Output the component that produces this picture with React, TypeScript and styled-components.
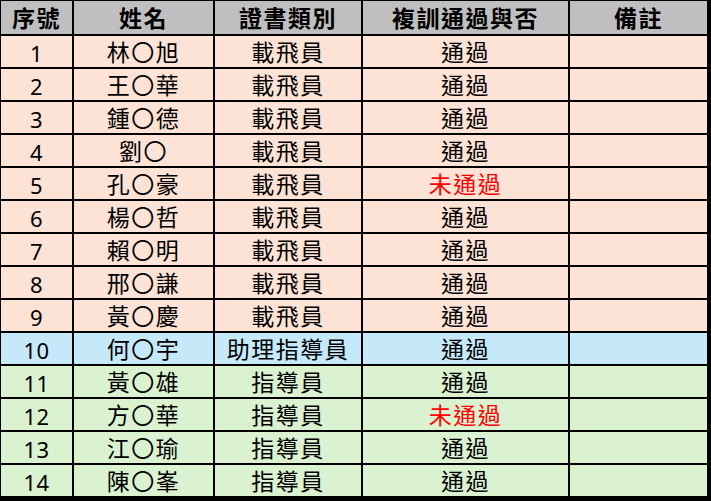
import styled, { createGlobalStyle } from "styled-components";

type Tone = "head" | "pilot" | "assistant" | "instructor";

const tones: Record<Tone, string> = {
    head: "#bfbfbf",
    pilot: "#fce3d6",
    assistant: "#c6e9f9",
    instructor: "#daf2d0",
};

const GlobalStyle = createGlobalStyle`
    html, body {
        margin: 0;
        padding: 0;
        background: #ffffff;
    }
    body {
        font-family: "Noto Sans CJK TC", "Noto Sans CJK SC", "Noto Sans", sans-serif;
    }
`;

const Sheet = styled.div`
    display: grid;
    grid-template-columns: 71px 139px 146px 205px 137px;
    grid-template-rows: 33px repeat(14, 31px);
    gap: 2px;
    width: 711px;
    height: 501px;
    box-sizing: border-box;
    padding: 1px 4px 5px 1px;
    background: #000000;
`;

const Row = styled.div`
    display: contents;
`;

const Cell = styled.div<{ $tone: Tone; $fail?: boolean }>`
    display: flex;
    align-items: center;
    justify-content: center;
    background: ${props => tones[props.$tone]};
    color: ${props => (props.$fail ? "#ff0000" : "#000000")};
    font-size: 23px;
    font-weight: ${props => (props.$tone === "head" ? 700 : 400)};
    letter-spacing: 1.5px;
    line-height: 1;
    white-space: nowrap;
`;

const Num = styled.span`
    font-family: "Noto Sans", "Open Sans", sans-serif;
    font-size: 22px;
    font-weight: 400;
    color: #000000;
    letter-spacing: 0.5px;
    padding-top: 2px;
`;

const headers = ["序號", "姓名", "證書類別", "複訓通過與否", "備註"];

const people: { name: string; tone: Tone; pass: boolean }[] = [
    { name: "林〇旭", tone: "pilot", pass: true },
    { name: "王〇華", tone: "pilot", pass: true },
    { name: "鍾〇德", tone: "pilot", pass: true },
    { name: "劉〇", tone: "pilot", pass: true },
    { name: "孔〇豪", tone: "pilot", pass: false },
    { name: "楊〇哲", tone: "pilot", pass: true },
    { name: "賴〇明", tone: "pilot", pass: true },
    { name: "邢〇謙", tone: "pilot", pass: true },
    { name: "黃〇慶", tone: "pilot", pass: true },
    { name: "何〇宇", tone: "assistant", pass: true },
    { name: "黃〇雄", tone: "instructor", pass: true },
    { name: "方〇華", tone: "instructor", pass: false },
    { name: "江〇瑜", tone: "instructor", pass: true },
    { name: "陳〇峯", tone: "instructor", pass: true },
];

const certName: Record<Tone, string> = {
    head: "",
    pilot: "載飛員",
    assistant: "助理指導員",
    instructor: "指導員",
};

function App() {
    return <>
        <GlobalStyle />
        <Sheet>
            <Row>
                {headers.map(h => <Cell key={h} $tone="head">{h}</Cell>)}
            </Row>
            {people.map((p, i) => (
                <Row key={i}>
                    <Cell $tone={p.tone}><Num>{i + 1}</Num></Cell>
                    <Cell $tone={p.tone}>{p.name}</Cell>
                    <Cell $tone={p.tone}>{certName[p.tone]}</Cell>
                    <Cell $tone={p.tone} $fail={!p.pass}>{p.pass ? "通過" : "未通過"}</Cell>
                    <Cell $tone={p.tone}></Cell>
                </Row>
            ))}
        </Sheet>
    </>
}

export default App;
